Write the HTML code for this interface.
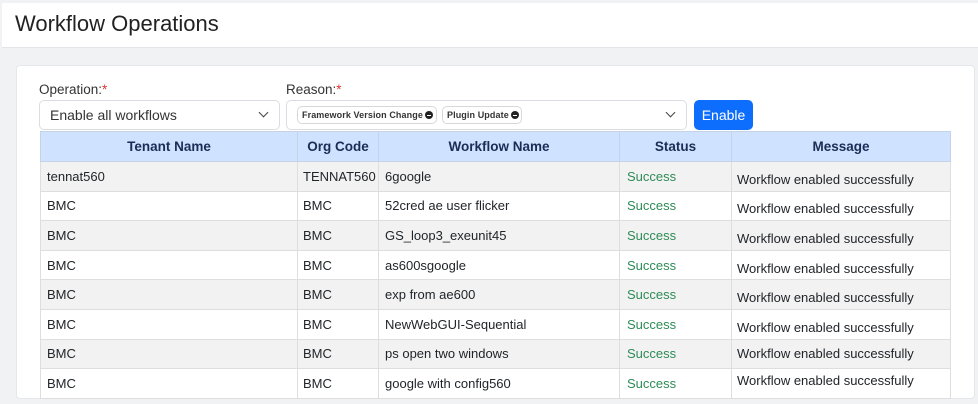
<!DOCTYPE html>
<html><head><style>
*{margin:0;padding:0;box-sizing:border-box}
html,body{width:978px;height:404px;overflow:hidden}
body{background:#f1f2f4;font-family:"Liberation Sans",Arial,sans-serif;position:relative;color:#212529}
.hdr{position:absolute;left:2px;top:3px;width:976px;height:45px;background:#fff;border-bottom:1px solid #e3e5e8}
.hdr h1{position:absolute;left:13px;top:8px;font-size:22px;font-weight:normal;color:#222}
.card{position:absolute;left:16px;top:65px;width:959px;height:334px;background:#fff;border:1px solid #e5e7ea;border-radius:4px}
.lbl{position:absolute;top:82px;font-size:13.5px;color:#333}
.lbl span{color:#d33}
.sel{position:absolute;top:100px;height:30px;border:1px solid #dadde1;border-radius:5px;background:#fff}
.chev{position:absolute;right:12px;top:8px;width:7px;height:7px;border-right:1.5px solid #444;border-bottom:1.5px solid #444;transform:rotate(45deg)}
.chip{position:absolute;top:106px;height:18px;border:1px solid #d8d8d8;border-radius:5px;font-size:9px;font-weight:bold;line-height:16px;padding:0 4px;color:#333;white-space:nowrap;letter-spacing:0.1px}
.chip i{display:inline-block;width:8px;height:8px;border-radius:50%;background:#222;vertical-align:-1px;margin-left:2px;position:relative}
.chip i:after{content:"";position:absolute;left:2px;top:3.5px;width:4px;height:1px;background:#fff}
.btn{position:absolute;left:694px;top:100px;width:59px;height:30px;background:#0d6efd;border-radius:5px;color:#fff;font-size:14px;text-align:center;line-height:30px}
table{position:absolute;left:40px;top:131px;width:910px;border-collapse:collapse;font-size:13px;table-layout:fixed}
th{background:#cfe2ff;height:30px;font-weight:bold;color:#1a2d55;border:1px solid #c6d3e6;font-size:13.5px}
td{height:29.6px;border:1px solid #dedede;padding:0 6px;vertical-align:middle;white-space:nowrap;overflow:hidden}
td.o{padding-left:5px;padding-right:0}
tr.g td{background:#f2f2f2}
td.s{color:#2e8b57;padding-left:7px}
td.m{padding-top:6px;padding-left:5px}
</style></head><body>
<div class="hdr"><h1>Workflow Operations</h1></div>
<div class="card"></div>
<div class="lbl" style="left:39px">Operation:<span>*</span></div>
<div class="lbl" style="left:286px">Reason:<span>*</span></div>
<div class="sel" style="left:39px;width:241px"><span style="position:absolute;left:10px;top:6px;font-size:14px;color:#333">Enable all workflows</span><div class="chev"></div></div>
<div class="sel" style="left:286px;width:401px"><div class="chev"></div></div>
<div class="chip" style="left:297px;width:140px">Framework Version Change<i></i></div>
<div class="chip" style="left:442px;width:80px">Plugin Update<i></i></div>
<div class="btn">Enable</div>
<table>
<colgroup><col style="width:257px"><col style="width:81px"><col style="width:241px"><col style="width:112px"><col style="width:219px"></colgroup>
<tr><th>Tenant Name</th><th>Org Code</th><th>Workflow Name</th><th>Status</th><th>Message</th></tr>
<tr class="g"><td>tennat560</td><td class="o">TENNAT560</td><td>6google</td><td class="s">Success</td><td class="m">Workflow enabled successfully</td></tr>
<tr><td>BMC</td><td class="o">BMC</td><td>52cred ae user flicker</td><td class="s">Success</td><td class="m">Workflow enabled successfully</td></tr>
<tr class="g"><td>BMC</td><td class="o">BMC</td><td>GS_loop3_exeunit45</td><td class="s">Success</td><td class="m">Workflow enabled successfully</td></tr>
<tr><td>BMC</td><td class="o">BMC</td><td>as600sgoogle</td><td class="s">Success</td><td class="m">Workflow enabled successfully</td></tr>
<tr class="g"><td>BMC</td><td class="o">BMC</td><td>exp from ae600</td><td class="s">Success</td><td class="m">Workflow enabled successfully</td></tr>
<tr><td>BMC</td><td class="o">BMC</td><td>NewWebGUI-Sequential</td><td class="s">Success</td><td class="m">Workflow enabled successfully</td></tr>
<tr class="g"><td>BMC</td><td class="o">BMC</td><td>ps open two windows</td><td class="s">Success</td><td style="padding-left:5px">Workflow enabled successfully</td></tr>
<tr><td>BMC</td><td class="o">BMC</td><td>google with config560</td><td class="s">Success</td><td style="vertical-align:top;padding-top:4px;padding-left:5px">Workflow enabled successfully</td></tr>
</table>
</body></html>
